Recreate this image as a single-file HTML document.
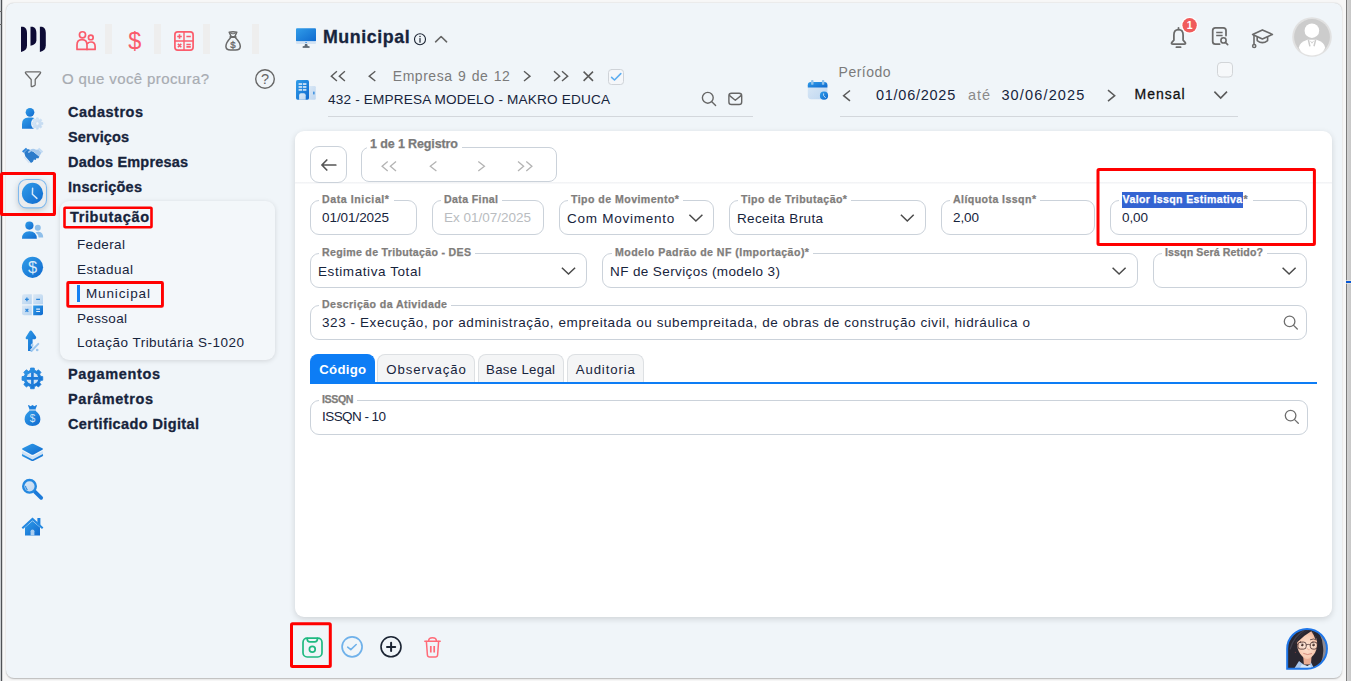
<!DOCTYPE html>
<html lang="pt-BR"><head>
<meta charset="utf-8">
<title>Municipal</title>
<style>
html,body{margin:0;padding:0}
body{width:1351px;height:681px;position:relative;overflow:hidden;background:#f7f7f7;font-family:"Liberation Sans",sans-serif;color:#17243c}
.a{position:absolute}
.t{position:absolute;white-space:nowrap;line-height:1;font-size:14px}
.b{font-weight:700}
.m{font-size:14.5px;font-weight:700;color:#17243c;-webkit-text-stroke:.3px #17243c}
.s{font-size:13.5px;color:#17243c}
.g{color:#7a7a7a}
.fld{position:absolute;border:1px solid #cbd2da;border-radius:9px;box-sizing:border-box;background:#fff}
.lb{position:absolute;white-space:nowrap;line-height:1;font-size:10.6px;font-weight:700;color:#807d7b;-webkit-text-stroke:.25px #807d7b;background:#fff;padding:0 4px 0 3px}
.v{font-size:13.5px;color:#17243c}
.red{position:absolute;border:3px solid #f00;box-sizing:border-box;border-radius:2px}
.tab{position:absolute;top:354px;height:28px;box-sizing:border-box;border:1px solid #dde0e3;border-bottom:none;border-radius:8px 8px 0 0;background:#f4f5f6}
svg{position:absolute;overflow:visible}
</style>
</head>
<body>
<!-- window chrome edges -->
<div class="a" style="left:0;top:0;width:3px;height:681px;background:linear-gradient(90deg,#d2d5d8 0,#c2c5c9 1px,#4f5256 1.25px,#4f5256 2.1px,#f7f7f7 2.6px)"></div>
<div class="a" style="left:1345px;top:0;width:6px;height:681px;background:linear-gradient(90deg,#f7f7f7 0,#f7f7f7 .6px,#6b6b6b 1px,#6b6b6b 1.4px,#d3d3d3 2px,#c7c7c7 100%)"></div>
<div class="a" style="left:1346.4px;top:280.4px;width:5px;height:3.4px;background:rgba(240,230,214,.7)"></div><div class="a" style="left:1346.2px;top:281px;width:5px;height:2.2px;background:#0757d6"></div>
<div class="a" style="left:0;top:24px;width:1.5px;height:1px;background:#666"></div>
<div class="a" style="left:0;top:10.5px;width:1.5px;height:1px;background:#666"></div>

<!-- app container -->
<div class="a" id="app" style="left:5.5px;top:2.5px;width:1336.5px;height:675.5px;background:#f0f5f9;border-radius:8px;box-shadow:0 .5px 1.5px rgba(0,0,0,.26)"></div>

<!-- ===== SIDEBAR ===== -->
<div id="side">
<!-- separators in top icon row -->
<div class="a" style="left:105px;top:24px;width:7px;height:29.6px;background:#eeeeee"></div>
<div class="a" style="left:154px;top:24px;width:7px;height:29.6px;background:#eeeeee"></div>
<div class="a" style="left:203px;top:24px;width:7px;height:29.6px;background:#eeeeee"></div>
<div class="a" style="left:252px;top:24px;width:7px;height:29.6px;background:#eeeeee"></div>

<span class="t" style="left: 62px; font-size: 15px; color: rgb(168, 172, 178); -webkit-text-stroke: 0.2px rgb(168, 172, 178); top: 71.3px; letter-spacing: 0.384px;">O que você procura?</span>

<span class="t m" style="left: 68px; top: 105.03px; letter-spacing: 0.51px;">Cadastros</span>
<span class="t m" style="left: 68px; top: 130.03px; letter-spacing: 0.076px;">Serviços</span>
<span class="t m" style="left: 68px; top: 155.03px; letter-spacing: 0.179px;">Dados Empresas</span>
<span class="t m" style="left: 68px; top: 180.03px; letter-spacing: 0.25px;">Inscrições</span>

<div class="a" style="left:60px;top:201px;width:215px;height:159px;background:#f3f7fa;border-radius:9px;box-shadow:0 1px 5px rgba(0,0,0,.13)"></div>
<span class="t m" style="left: 70px; top: 210.03px; letter-spacing: 0.63px;">Tributação</span>
<span class="t s" style="left: 77px; top: 237.57px; letter-spacing: 0.37px;">Federal</span>
<span class="t s" style="left: 77px; top: 262.57px; letter-spacing: 0.493px;">Estadual</span>
<div class="a" style="left:77px;top:285px;width:3px;height:17px;background:#1580f2"></div>
<span class="t s" style="left: 86px; top: 286.57px; letter-spacing: 0.871px;">Municipal</span>
<span class="t s" style="left: 77px; top: 311.57px; letter-spacing: 0.328px;">Pessoal</span>
<span class="t s" style="left: 77px; top: 335.57px; letter-spacing: 0.485px;">Lotação Tributária S-1020</span>

<span class="t m" style="left: 68px; top: 367.03px; letter-spacing: 0.641px;">Pagamentos</span>
<span class="t m" style="left: 68px; top: 392.03px; letter-spacing: 0.578px;">Parâmetros</span>
<span class="t m" style="left: 68px; top: 417.03px; letter-spacing: 0.385px;">Certificado Digital</span>

</div>

<!-- ===== HEADER ===== -->
<div id="head">
<span class="t b" style="left: 322.9px; font-size: 17.8px; color: rgb(23, 36, 60); -webkit-text-stroke: 0.3px rgb(23, 36, 60); top: 28.63px; letter-spacing: 0.6px;">Municipal</span>

<span class="t" style="left: 392.8px; font-size: 14px; color: rgb(123, 123, 123); word-spacing: 1px; top: 69.25px; letter-spacing: 0.527px;">Empresa 9 de 12</span>
<span class="t" style="left: 328px; font-size: 13.6px; color: rgb(23, 36, 60); top: 92.79px; letter-spacing: 0.168px;">432 - EMPRESA MODELO - MAKRO EDUCA</span>
<div class="a" style="left:328px;top:116px;width:425px;height:1px;background:#d3d7dc"></div>

<span class="t" style="left: 838.6px; font-size: 14px; color: rgb(123, 123, 123); top: 65.05px; letter-spacing: 0.492px;">Período</span>
<span class="t" style="left: 876px; font-size: 14.5px; color: rgb(23, 36, 60); top: 88.33px; letter-spacing: 0.736px;">01/06/2025</span>
<span class="t" style="left: 968px; font-size: 14.5px; color: rgb(138, 138, 138); top: 88.33px; letter-spacing: 1.014px;">até</span>
<span class="t" style="left: 1001.4px; font-size: 14.5px; color: rgb(23, 36, 60); top: 88.43px; letter-spacing: 1.158px;">30/06/2025</span>
<span class="t" style="left: 1134.6px; font-size: 14px; color: rgb(17, 17, 17); -webkit-text-stroke: 0.28px rgb(17, 17, 17); top: 87.45px; letter-spacing: 0.972px;">Mensal</span>
<div class="a" style="left:840px;top:116px;width:398px;height:1px;background:#d3d7dc"></div>
</div>

<!-- ===== CARD ===== -->
<div class="a" id="card" style="left:295px;top:131px;width:1037px;height:486px;background:#fff;border-radius:9px;box-shadow:0 2px 6px rgba(0,0,0,.14)"></div>
<div class="a" style="left:295px;top:182px;width:1037px;height:2px;background:linear-gradient(#f0f1f3,#fbfbfc)"></div>

<div id="form">
<div class="fld" style="left:310px;top:146px;width:37px;height:37px"></div>
<div class="fld" style="left:361px;top:147px;width:196px;height:35px;border-radius:8px"></div>
<span class="lb" style="left: 367px; font-size: 12.5px; color: rgb(122, 122, 122); top: 138.42px; letter-spacing: -0.116px;">1 de 1 Registro</span>

<!-- row 1 -->
<div class="fld" style="left:310px;top:200px;width:107px;height:35px"></div>
<span class="lb" style="left: 319px; top: 194.03px; letter-spacing: 0.578px;">Data Inicial*</span>
<span class="t v" style="left: 322px; top: 210.57px; letter-spacing: -0.064px;">01/01/2025</span>

<div class="fld" style="left:432px;top:200px;width:112px;height:35px"></div>
<span class="lb" style="left: 441px; top: 194.03px; letter-spacing: 0.373px;">Data Final</span>
<span class="t v" style="left: 444px; color: rgb(185, 188, 192); top: 210.57px; letter-spacing: -0.007px;">Ex 01/07/2025</span>

<div class="fld" style="left:559px;top:200px;width:155px;height:35px"></div>
<span class="lb" style="left: 568px; top: 194.03px; letter-spacing: 0.444px;">Tipo de Movimento*</span>
<span class="t v" style="left: 567px; top: 211.87px; letter-spacing: 0.743px;">Com Movimento</span>

<div class="fld" style="left:729px;top:200px;width:197px;height:35px"></div>
<span class="lb" style="left: 738px; top: 194.03px; letter-spacing: 0.438px;">Tipo de Tributação*</span>
<span class="t v" style="left: 737px; top: 211.87px; letter-spacing: 0.35px;">Receita Bruta</span>

<div class="fld" style="left:941px;top:200px;width:154px;height:35px"></div>
<span class="lb" style="left: 950px; top: 194.03px; letter-spacing: 0.421px;">Alíquota Issqn*</span>
<span class="t v" style="left: 953px; top: 210.57px; letter-spacing: -0.094px;">2,00</span>

<div class="fld" style="left:1110px;top:200px;width:197px;height:35px"></div>
<div class="a" style="left:1119px;top:192px;width:134px;height:12px;background:#fff"></div><div class="a" style="left:1122px;top:191.8px;width:120.8px;height:15.9px;background:#3464d2"></div>
<span class="lb" style="left: 1122.6px; padding: 0px; background: none; color: rgb(255, 255, 255); -webkit-text-stroke: 0.25px rgb(255, 255, 255); top: 194.03px; letter-spacing: 0.34px;">Valor Issqn Estimativa</span><span class="lb" style="left: 1243.6px; padding: 0px; background: none; top: 194.03px;">*</span>
<span class="t v" style="left: 1122px; top: 210.57px; letter-spacing: -0.094px;">0,00</span>

<!-- row 2 -->
<div class="fld" style="left:310px;top:253px;width:277px;height:35px"></div>
<span class="lb" style="left: 319px; top: 247.43px; letter-spacing: 0.308px;">Regime de Tributação - DES</span>
<span class="t v" style="left: 318px; top: 264.57px; letter-spacing: 0.58px;">Estimativa Total</span>

<div class="fld" style="left:602px;top:253px;width:536px;height:35px"></div>
<span class="lb" style="left: 612px; top: 247.43px; letter-spacing: 0.452px;">Modelo Padrão de NF (Importação)*</span>
<span class="t v" style="left: 610px; top: 264.57px; letter-spacing: 0.393px;">NF de Serviços (modelo 3)</span>

<div class="fld" style="left:1153px;top:253px;width:154px;height:35px"></div>
<span class="lb" style="left: 1162px; top: 247.43px; letter-spacing: 0.119px;">Issqn Será Retido?</span>

<!-- row 3 -->
<div class="fld" style="left:310px;top:305px;width:997px;height:35px"></div>
<span class="lb" style="left: 319px; top: 299.03px; letter-spacing: 0.42px;">Descrição da Atividade</span>
<span class="t v" style="left: 322px; top: 315.57px; letter-spacing: 0.582px;">323 - Execução, por administração, empreitada ou subempreitada, de obras de construção civil, hidráulica o</span>

<!-- tabs -->
<div class="tab" style="left:310px;width:65px;background:#0d7df5;border-color:#0d7df5"></div>
<span class="t" style="left: 319.3px; font-size: 13.2px; color: rgb(255, 255, 255); font-weight: 700; top: 362.83px; letter-spacing: 0.276px;">Código</span>
<div class="tab" style="left:377px;width:97.5px"></div>
<span class="t" style="left: 386.3px; font-size: 13.2px; color: rgb(23, 36, 60); top: 362.83px; letter-spacing: 0.943px;">Observação</span>
<div class="tab" style="left:477.5px;width:86px"></div>
<span class="t" style="left: 486px; font-size: 13.2px; color: rgb(23, 36, 60); top: 362.83px; letter-spacing: 0.333px;">Base Legal</span>
<div class="tab" style="left:566.5px;width:77px"></div>
<span class="t" style="left: 575.8px; font-size: 13.2px; color: rgb(23, 36, 60); top: 362.83px; letter-spacing: 0.867px;">Auditoria</span>
<div class="a" style="left:310px;top:381.8px;width:1007px;height:2px;background:#0d7df5"></div>

<div class="fld" style="left:310px;top:400px;width:998px;height:35px"></div>
<span class="lb" style="left: 319px; top: 394.03px; letter-spacing: -0.392px;">ISSQN</span>
<span class="t v" style="left: 322px; top: 410.07px; letter-spacing: -0.559px;">ISSQN - 10</span>

</div>

<!-- ICONS -->
<svg id="ic" width="1351" height="681" viewBox="0 0 1351 681" style="left:0;top:0" fill="none" stroke-linecap="round" stroke-linejoin="round">
<defs>
<linearGradient id="bg" x1="0" y1="0" x2="1" y2="1"><stop offset="0" stop-color="#319de9"></stop><stop offset="1" stop-color="#0f69ce"></stop></linearGradient>
<linearGradient id="lg2" x1="0" y1="0" x2="1" y2="1"><stop offset="0" stop-color="#dce9f6"></stop><stop offset="1" stop-color="#bdd6f0"></stop></linearGradient>
<linearGradient id="lg" x1="0" y1="0" x2="1" y2="1"><stop offset="0" stop-color="#dbe8f5"></stop><stop offset="1" stop-color="#b5d3f0"></stop></linearGradient>
<clipPath id="avc"><circle cx="1312.2" cy="36.6" r="17.8"></circle></clipPath>
<clipPath id="chc"><path d="M1288,648.8 A19,19 0 1 1 1307,667.5 L1288,667.5 Z"></path></clipPath>
</defs>

<!-- logo -->
<g fill="#0d0b35" stroke="none">
<path d="M21,26.7 L23.2,26.7 Q27,27.8 27,33 L27,45.5 Q27,50.6 21,52 Z"></path>
<path d="M30.5,26.7 L32.6,26.7 Q36.4,27.8 36.4,33 L36.4,40.2 Q36.4,44.6 30.5,45.8 Z"></path>
<path d="M39.9,26.7 L42,26.7 Q45.8,27.8 45.8,33 L45.8,45.5 Q45.8,50.6 39.9,52 Z"></path>
</g>

<!-- top row icons -->
<g stroke="#fa5c6c" stroke-width="1.7">
<circle cx="82.5" cy="34.8" r="3.05"></circle>
<path d="M77,49.4 L77,45 Q77,39.7 82,39.7 Q87,39.7 87,45 L87,49.4 Z"></path>
<circle cx="90.8" cy="37.4" r="2.35"></circle>
<path d="M87,49.4 L95.1,49.4 L95.1,46.4 Q95.1,42 91,42 Q88.8,42 87.6,43.4"></path>
</g>
<text x="134.8" y="48.5" font-size="23.5" fill="#fa5c6c" stroke="none" text-anchor="middle" font-family="Liberation Sans, sans-serif">$</text>
<g stroke="#fb5c6c">
<rect x="174.9" y="31.9" width="18.2" height="18.2" rx="2.8" stroke-width="1.7"></rect>
<path d="M184,32 V50 M175,41 H193" stroke-width="1.4"></path>
<path d="M177.2,36.5 H181.8 M179.5,34.2 V38.8 M186.4,36.5 H190.8 M177.9,43.9 L181.3,47.3 M181.3,43.9 L177.9,47.3 M186.4,44.5 H190.8 M186.4,46.9 H190.8" stroke-width="1.6" stroke-linecap="butt"></path>
</g>
<g stroke="#6a6a6a" stroke-width="1.5">
<path d="M230.6,37.8 Q226,42.6 225.9,46.3 Q225.9,50.1 230.5,50.1 H235.6 Q240.3,50.1 240.3,46.3 Q240.2,42.6 235.5,37.8"></path>
<path d="M230.9,35.9 L229.2,32.3 Q233,31.3 236.8,32.3 L235.1,35.9"></path>
<path d="M230.4,36.9 H235.6" stroke-width="2"></path>
<path d="M230.6,33.2 Q233,34.8 235.4,33.2" stroke-width="1"></path>
</g>
<text x="233" y="47.7" font-size="9.6" fill="#666" stroke="#666" stroke-width=".3" text-anchor="middle" font-family="Liberation Sans, sans-serif">$</text>

<!-- filter + help -->
<path d="M26.5,71.9 H39.5 Q41.4,71.9 40.2,73.5 L35.2,79.5 V84.6 Q35.2,85.4 34.5,85.7 L32.2,86.6 Q31.2,86.9 31.2,85.9 V79.5 L25.8,73.5 Q24.6,71.9 26.5,71.9 Z" stroke="#6a6a6a" stroke-width="1.25"></path>
<circle cx="265" cy="79" r="9.3" stroke="#666" stroke-width="1.4"></circle>
<text x="265" y="84.2" font-size="14.5" fill="#666" stroke="none" text-anchor="middle" font-family="Liberation Sans, sans-serif">?</text>

<!-- left column icons -->
<g stroke="none">
<!-- user gear -->
<circle cx="30" cy="112.3" r="4.35" fill="url(#bg)"></circle>
<path d="M22,128.8 L22,124 Q22,117.5 28.6,117.5 L31.4,117.5 Q35.6,117.5 36.6,121 L36.6,128.8 Z" fill="url(#bg)"></path>
<circle cx="37.3" cy="123.5" r="6.3" fill="#f0f5f9"></circle>
<path fill-rule="evenodd" fill="url(#lg2)" stroke="#c4dbf2" stroke-width=".6" stroke-linejoin="round" d="M41.58,122.47 L42.93,122.61 L42.93,124.39 L41.58,124.53 L41.05,125.80 L41.91,126.85 L40.65,128.11 L39.60,127.25 L38.33,127.78 L38.19,129.13 L36.41,129.13 L36.27,127.78 L35.00,127.25 L33.95,128.11 L32.69,126.85 L33.55,125.80 L33.02,124.53 L31.67,124.39 L31.67,122.61 L33.02,122.47 L33.55,121.20 L32.69,120.15 L33.95,118.89 L35.00,119.75 L36.27,119.22 L36.41,117.87 L38.19,117.87 L38.33,119.22 L39.60,119.75 L40.65,118.89 L41.91,120.15 L41.05,121.20 Z M35.60,123.50 a1.70,1.70 0 1 0 3.40,0 a1.70,1.70 0 1 0 -3.40,0 Z"></path>
<!-- handshake -->
<g transform="translate(16,102) scale(.1)">
<path d="M60,492 L100,458 L114,472 L74,508 Z" fill="#2f86db"></path>
<path d="M232,458 L272,494 L258,510 L218,472 Z" fill="#c3dbf3"></path>
<path d="M82,505 L118,470 L150,482 L176,500 L234,548 L222,566 L206,560 L196,581 L179,576 L169,598 L150,609 L94,546 Z" fill="#2b7bcb"></path>
<path d="M88,548 L140,606 L128,612 L78,556 Z" fill="#cddff2" opacity=".8"></path>
<path d="M222,476 L255,508 L232,546 L180,501 L152,492 L130,511 Q118,508 120,497 L150,472 Q176,462 200,478 Z" fill="#a6c9ed"></path>
</g>
<!-- clock (selected) -->
</g>
<rect x="18.5" y="179.5" width="28" height="28.4" rx="8" fill="#eaecee" stroke="#7fb9ee" stroke-width="1.1" style="filter:drop-shadow(0 2px 3px rgba(0,0,0,.18))"></rect>
<circle cx="32.5" cy="193.4" r="10.6" fill="url(#bg)"></circle>
<path d="M32.6,188.2 L32.4,194.2 L36.9,198.4" stroke="#d4e7f8" stroke-width="1.5"></path>
<g stroke="none">
<!-- users -->
<circle cx="37.8" cy="227.7" r="3" fill="#8fbfea"></circle>
<path d="M35.5,232.6 Q37,231.6 38.8,231.8 Q43.2,232.4 43.2,237.6 L38.6,237.6 Q38.4,234.4 35.5,232.6 Z" fill="#8fbfea"></path>
<circle cx="29.4" cy="225.6" r="4.1" fill="url(#bg)"></circle>
<path d="M22,238.8 Q22,231.2 29.4,231.2 Q36.8,231.2 36.8,238.8 Z" fill="url(#bg)"></path>
<!-- dollar circle -->
<circle cx="32.5" cy="267.3" r="10.6" fill="url(#bg)"></circle>
<text x="32.5" y="273" font-size="16.5" fill="#d9e9f8" text-anchor="middle" font-family="Liberation Sans, sans-serif">$</text>
<!-- calc -->
<path d="M24,294.3 H31.8 V304.2 H22 V296.3 Q22,294.3 24,294.3 Z" fill="url(#lg)"></path>
<path d="M33.2,294.3 H41 Q43,294.3 43,296.3 V304.2 H33.2 Z" fill="url(#lg)"></path>
<path d="M22,305.4 H31.8 V315.2 H24 Q22,315.2 22,313.2 Z" fill="url(#lg)"></path>
<path d="M33.2,305.4 H43 V313.2 Q43,315.2 41,315.2 H33.2 Z" fill="url(#bg)"></path>
</g>
<path d="M25,299.3 H28.8 M26.9,297.4 V301.2 M36.2,299.3 H40 M25.5,308.9 L28.3,311.7 M28.3,308.9 L25.5,311.7" stroke="#2a86dc" stroke-width="1.3" stroke-linecap="butt"></path>
<path d="M36.2,309.2 H40 M36.2,311.5 H40" stroke="#e4f0fb" stroke-width="1.2" stroke-linecap="butt"></path>
<g stroke="none">
<!-- arrow percent -->
<path d="M30.8,330.5 Q31.6,330.5 32.2,331.4 L35.9,336.6 Q36.7,338 35.7,338.8 Q35.1,339.3 33.9,339.3 L32.6,339.3 L32.6,351 L28,351 L28,339.3 L27.3,339.3 Q25.1,339.1 25.8,337.2 L29.4,331.4 Q30,330.5 30.8,330.5 Z" fill="url(#bg)"></path>
<path d="M31.4,351 L38.3,343.9" stroke="#f0f5f9" stroke-width="3.6" stroke-linecap="butt"></path>
<path d="M31.4,351 L38.3,343.9" stroke="#9cc6ee" stroke-width="2"></path>
<circle cx="32.5" cy="345.2" r="1.35" fill="#9cc6ee" stroke="#f0f5f9" stroke-width=".5"></circle>
<circle cx="37.2" cy="350" r="1.35" fill="#9cc6ee"></circle>
</g>
<!-- gear plus -->
<path d="M30.31,370.26 L30.59,368.06 L34.21,368.06 L34.49,370.26 L36.68,371.17 L38.44,369.81 L40.99,372.36 L39.63,374.12 L40.54,376.31 L42.74,376.59 L42.74,380.21 L40.54,380.49 L39.63,382.68 L40.99,384.44 L38.44,386.99 L36.68,385.63 L34.49,386.54 L34.21,388.74 L30.59,388.74 L30.31,386.54 L28.12,385.63 L26.36,386.99 L23.81,384.44 L25.17,382.68 L24.26,380.49 L22.06,380.21 L22.06,376.59 L24.26,376.31 L25.17,374.12 L23.81,372.36 L26.36,369.81 L28.12,371.17 Z" fill="url(#bg)" stroke="#1f80dc" stroke-width=".8" stroke-linejoin="round"></path>
<circle cx="32.4" cy="378.4" r="5.9" fill="#cfe2f5"></circle>
<path d="M26.2,378.4 H38.6 M32.4,372.2 V384.6" stroke="#1c7ad9" stroke-width="2.6" stroke-linecap="butt"></path>
<g stroke="none">
<!-- money bag blue -->
<path d="M29.2,411 Q24.4,414.6 24.6,419.6 Q24.8,426 32.5,426 Q40.2,426 40.4,419.6 Q40.6,414.6 35.8,411 Z" fill="url(#bg)"></path>
<path d="M29.6,409.4 L28,405.4 Q28.2,404.8 29,405.2 L30.6,406.2 L32.5,405 L34.4,406.2 L36,405.2 Q36.8,404.8 37,405.4 L35.4,409.4 Z" fill="#1f80dc"></path>
<rect x="29.2" y="409.2" width="6.6" height="1.8" fill="#8fbfea"></rect>
<text x="32.5" y="422.2" font-size="10" fill="#cfe3f7" text-anchor="middle" font-family="Liberation Sans, sans-serif">$</text>
<!-- layers -->
<path d="M22.3,451 L32.5,456.4 L42.7,451 L43.1,453.7 L32.5,459.2 L21.9,453.7 Z" fill="#cfe2f5"></path>
<path d="M22.2,454 L32.5,459.4 L42.8,454 Q43.7,455.4 42.6,456.2 L33.7,460.7 Q32.5,461.3 31.3,460.7 L22.4,456.2 Q21.3,455.4 22.2,454 Z" fill="url(#bg)"></path>
<path d="M31.3,444.1 Q32.5,443.5 33.7,444.1 L42.4,448.2 Q43.7,448.9 42.4,449.7 L33.7,454.4 Q32.5,455 31.3,454.4 L22.6,449.7 Q21.3,448.9 22.6,448.2 Z" fill="url(#bg)"></path>
</g>
<!-- magnifier -->
<path d="M34.8,491.6 L41.2,497.9" stroke="#1c7ad9" stroke-width="3.7"></path>
<circle cx="29.5" cy="486.3" r="6.3" stroke="#2488e0" stroke-width="2.4" fill="url(#lg2)"></circle>
<path d="M25.6,486.4 Q25.8,488.4 27.2,489.6" stroke="#2a8ae0" stroke-width="1.1" fill="none"></path>
<g stroke="none">
<!-- home -->
<rect x="37.4" y="518" width="3" height="7" fill="#1f80dc"></rect>
<path d="M25,527.6 L32.5,521 L40,527.6 L40,535.4 L25,535.4 Z" fill="url(#bg)"></path>
<path d="M32.5,517.4 L43.4,527.4 L42,529 L32.5,520.4 L23,529 L21.6,527.4 Z" fill="#2589e1"></path>
<path d="M30.6,535.4 V531.2 Q30.6,529.4 32.5,529.4 Q34.4,529.4 34.4,531.2 V535.4 Z" fill="#a9cdf0"></path>
</g>

<!-- header: monitor -->
<g stroke="none">
<rect x="296" y="28.2" width="20" height="13.2" rx="1" fill="url(#bg)"></rect>
<path d="M296,41.2 H316 V43 Q316,44 315,44 H297 Q296,44 296,43 Z" fill="#d3e3f3"></path>
<path d="M305,44 H307.2 L307.8,46.6 H304.4 Z" fill="#5d6a77"></path>
<rect x="302.6" y="46.2" width="7" height="1.5" rx=".5" fill="#46525e"></rect>
<rect x="305.3" y="42.1" width="1.6" height=".9" fill="#3a8fe0"></rect>
</g>
<circle cx="420" cy="39.2" r="5.5" stroke="#1b2433" stroke-width="1.1"></circle>
<circle cx="420" cy="36.5" r=".75" fill="#1b2433"></circle>
<path d="M420,38.6 V42.2" stroke="#1b2433" stroke-width="1.2"></path>
<path d="M435.6,41.8 L441.1,36.5 L446.6,41.8" stroke="#666" stroke-width="1.6"></path>

<!-- building -->
<g stroke="none">
<rect x="308" y="86" width="7.8" height="13.7" rx="1.2" fill="url(#lg2)"></rect>
<rect x="313.1" y="91.6" width="1.5" height="2.8" rx=".4" fill="#3a8fe0"></rect>
<rect x="296" y="80.1" width="13" height="19.6" rx="1.6" fill="url(#bg)"></rect>
<g fill="#c4dcf4">
<rect x="298.6" y="83.1" width="3.5" height="1.9"></rect><rect x="302.9" y="83.1" width="3.5" height="1.9"></rect>
<rect x="298.6" y="86" width="3.5" height="1.9"></rect><rect x="302.9" y="86" width="3.5" height="1.9"></rect>
<rect x="298.6" y="88.9" width="3.5" height="1.9"></rect><rect x="302.9" y="88.9" width="3.5" height="1.9"></rect>
</g>
<path d="M299.1,99.7 V95.2 Q299.1,93.3 301,93.3 H303.8 Q305.7,93.3 305.7,95.2 V99.7 Z" fill="url(#lg2)"></path>
</g>

<!-- company nav -->
<g stroke="#5a5a5a" stroke-width="1.4" stroke-linejoin="miter" stroke-linecap="butt">
<path d="M336.9,71.3 L331.3,76.15 L336.9,81"></path><path d="M344.9,71.3 L339.3,76.15 L344.9,81"></path>
<path d="M375.3,71.3 L369.2,76.15 L375.3,81"></path>
<path d="M524,71.3 L530,76.15 L524,81"></path>
<path d="M554,71.3 L559.7,76.15 L554,81"></path><path d="M562,71.3 L567.7,76.15 L562,81"></path>
<path d="M583.6,71.6 L593,80.9 M593,71.6 L583.6,80.9" stroke-width="1.5"></path>
</g>
<rect x="608.5" y="69.5" width="15" height="15" rx="3" fill="#f5f7fa" stroke="#cfd3d8"></rect>
<path d="M611.6,77.4 L614.5,80 L620.8,73.6" stroke="#5eaef0" stroke-width="1.6"></path>
<circle cx="707.8" cy="97.8" r="5.4" stroke="#666" stroke-width="1.4"></circle>
<path d="M711.8,101.8 L715.6,105.4" stroke="#666" stroke-width="1.4"></path>
<rect x="728.9" y="93.3" width="12.8" height="11.2" rx="2.6" stroke="#666" stroke-width="1.4"></rect>
<path d="M729.6,95.6 L735.3,100.2 L741,95.6" stroke="#666" stroke-width="1.4"></path>

<!-- calendar -->
<g stroke="none">
<rect x="807.8" y="82" width="19.6" height="17.2" rx="3.4" fill="url(#lg2)"></rect>
<path d="M807.8,87.4 V85.2 Q807.8,81.9 811.1,81.9 H824.1 Q827.4,81.9 827.4,85.2 V87.4 Z" fill="url(#bg)"></path>
<rect x="811.1" y="80" width="2.4" height="4.8" rx=".9" fill="#8fc1ea"></rect>
<rect x="821.9" y="80" width="2.4" height="4.8" rx=".9" fill="#8fc1ea"></rect>
<circle cx="824" cy="95.7" r="4.1" fill="url(#bg)"></circle>
<path d="M823.6,93.8 V95.6 L825.4,97.6" stroke="#cfe3f7" stroke-width=".9" fill="none"></path>
</g>
<g stroke="#5a5a5a" stroke-width="1.5" stroke-linejoin="miter" stroke-linecap="butt">
<path d="M850,90.5 L843.6,95.7 L850,100.9"></path>
<path d="M1108,90.2 L1114.7,95.7 L1108,101.2"></path>
<path d="M1214.4,91.6 L1220.7,98 L1227,91.6" stroke-width="1.6"></path>
</g>
<rect x="1217.5" y="62.5" width="15" height="14.5" rx="3.5" fill="#f6f8fa" stroke="#d2d5d8"></rect>

<!-- top-right icons -->
<g stroke="#6a6a6a" stroke-width="1.75">
<path d="M1173.9,40.2 V35 Q1173.9,29.7 1178.5,29.7 Q1183.1,29.7 1183.1,35 V40.2 L1185.3,42.6 Q1186,44.2 1184.2,44.2 H1172.8 Q1171,44.2 1171.7,42.6 Z"></path>
<path d="M1178.5,27.8 V29.4 M1176.4,47.2 H1180.6"></path>
<path d="M1226,35.6 V30.6 Q1226,27.9 1223.3,27.9 H1215.4 Q1212.7,27.9 1212.7,30.6 V41.5 Q1212.7,44.2 1215.4,44.2 H1219.6"></path>
<path d="M1216.2,32.4 H1222.6 M1216.2,35.5 H1222.6" stroke-width="1.5" stroke-linecap="butt"></path>
<circle cx="1223.5" cy="40.4" r="2.6" stroke-width="1.6"></circle>
<path d="M1225.6,42.6 L1227.7,44.6" stroke-width="1.6"></path>
<path d="M1252.6,34.4 L1262.4,29.9 L1272.4,34.4 L1262.4,38.9 Z" stroke-width="1.6"></path>
<path d="M1257.2,36.8 V40.6 Q1262.4,44.8 1267.6,40.6 V36.8" stroke-width="1.6"></path>
<path d="M1254,35.2 V44" stroke-width="1.6"></path>
<circle cx="1254.2" cy="46" r="1.6" stroke-width="1.5"></circle>
</g>
<circle cx="1189.6" cy="25.3" r="8.4" fill="#fff"></circle>
<circle cx="1189.6" cy="25.3" r="7.2" fill="#f05b5b"></circle>
<text x="1189.6" y="29" font-size="10.5" font-weight="700" fill="#fff" text-anchor="middle" font-family="Liberation Sans, sans-serif">1</text>
<circle cx="1312" cy="37" r="19.8" fill="#e1e1e1"></circle>
<circle cx="1312" cy="37" r="17.9" fill="#cccccc"></circle>
<g stroke="none">
<circle cx="1311.9" cy="30.7" r="7.3" fill="#fff"></circle>
<path d="M1298.9,47.6 Q1299.4,42.6 1307.4,39.8 L1316.6,39.8 Q1324.6,42.6 1325.1,47.6 C1324,52.6 1318.5,55.5 1312,55.5 C1305.5,55.5 1300,52.6 1298.9,47.6 Z" fill="#fff"></path>
<path d="M1308.4,39.9 L1309.9,46.3 M1315.6,39.9 L1314,46.3" stroke="#cccccc" stroke-width="1.5" stroke-linecap="butt"></path>
<path d="M1310.6,41.2 L1312,43.2 L1313.4,41.2" stroke="#d6d6d6" stroke-width="1" fill="none"></path>
</g>

<!-- form icons -->
<path d="M322.2,165 H335.8 M326.8,160 L321.9,165 L326.8,170" stroke="#555" stroke-width="1.7"></path>
<g stroke="#b3b3b3" stroke-width="1.3" stroke-linejoin="miter" stroke-linecap="butt">
<path d="M387.7,161.6 L382.1,166.3 L387.7,171"></path><path d="M396,161.6 L390.4,166.3 L396,171"></path>
<path d="M436.4,161.6 L430.3,166.3 L436.4,171"></path>
<path d="M478.3,161.6 L484.4,166.3 L478.3,171"></path>
<path d="M518,161.6 L523.6,166.3 L518,171"></path><path d="M526.3,161.6 L531.9,166.3 L526.3,171"></path>
</g>
<g stroke="#4a4a4a" stroke-width="1.5" stroke-linejoin="miter" stroke-linecap="butt">
<path d="M689.4,214.7 L695.9,221 L702.4,214.7"></path>
<path d="M900.9,214.7 L907.3,221 L913.7,214.7"></path>
<path d="M561.9,267.8 L568.5,274 L575.1,267.8"></path>
<path d="M1112.6,267.8 L1119.1,274 L1125.6,267.8"></path>
<path d="M1282.6,267.8 L1289.1,274 L1295.6,267.8"></path>
</g>
<g stroke="#6e6e6e" stroke-width="1.3">
<circle cx="1289.6" cy="321.4" r="5.3"></circle><path d="M1293.6,325.4 L1297.3,329"></path>
<circle cx="1290.6" cy="415.6" r="5.3"></circle><path d="M1294.6,419.6 L1298.3,423.2"></path>
</g>

<!-- bottom action icons -->
<g stroke="#1fb981" stroke-width="1.7">
<rect x="303" y="638.2" width="19" height="18.8" rx="4.2"></rect>
<path d="M307.2,638.4 V639 Q307.2,641.8 310,641.8 H314.6 Q317.4,641.8 317.4,639 V638.4"></path>
<circle cx="312.3" cy="649.2" r="2.9"></circle>
</g>
<circle cx="352.1" cy="646.8" r="10" stroke="#6fb1ea" stroke-width="1.7"></circle>
<path d="M347.7,647.2 L350.8,649.6 L356.2,644.5" stroke="#6fb1ea" stroke-width="1.6"></path>
<circle cx="391" cy="646.8" r="10" stroke="#1b2433" stroke-width="1.6"></circle>
<path d="M387,646.9 H395.2 M391.1,642.8 V651" stroke="#1b2433" stroke-width="2"></path>
<g stroke="#ff6b78" stroke-width="1.5">
<path d="M424.8,641.3 H440.2"></path>
<path d="M428.6,641 Q428.6,637.8 432.5,637.8 Q436.4,637.8 436.4,641"></path>
<path d="M426.4,641.6 L427.4,655 Q427.6,657 429.6,657 H435.4 Q437.4,657 437.6,655 L438.6,641.6"></path>
<path d="M430.8,646 V652.6 M434.2,646 V652.6" stroke-width="1.7" stroke-linecap="butt"></path>
</g>

<!-- chat avatar -->
<g transform="translate(1281,623) scale(0.076336)">
<clipPath id="chc2"><path d="M81,338.5 A260.5,260.5 0 1 1 341.5,599 L81,599 Z"></path></clipPath>
<radialGradient id="skin" cx=".5" cy=".55" r=".6"><stop offset="0" stop-color="#fde3d2"></stop><stop offset=".6" stop-color="#f8cfb8"></stop><stop offset="1" stop-color="#eeb296"></stop></radialGradient>
<g clip-path="url(#chc2)" stroke="none">
<rect x="60" y="60" width="560" height="560" fill="#2a2730"></rect>
<path d="M505,140 Q610,240 600,370 Q585,470 520,530 Q565,420 550,310 Q545,215 505,140 Z" fill="#8c8991"></path>
<path d="M300,100 Q170,170 120,340" stroke="#4b4956" stroke-width="16" fill="none" opacity=".7"></path>
<path d="M350,95 Q240,150 185,270" stroke="#45434f" stroke-width="10" fill="none" opacity=".6"></path>
<path d="M290,430 H400 L392,545 H300 Z" fill="#e9ad94"></path>
<path d="M165,610 L236,498 Q262,522 302,546 L346,562 L386,540 Q392,520 384,498 L432,592 L432,610 Z" fill="#a9c6ea"></path>
<path d="M240,610 L272,540 L346,566 L382,546 L402,610 Z" fill="#d6e5f7"></path>
<path d="M213,252 Q203,332 250,402 Q300,470 345,473 Q400,466 446,390 Q482,320 471,230 Q442,130 396,108 Q300,162 213,252 Z" fill="url(#skin)"></path>
<path d="M396,108 Q430,150 452,215 Q470,190 440,140 Z" fill="#2a2730"></path>
<path d="M385,218 Q430,196 468,222" stroke="#2f2226" stroke-width="9" fill="none"></path>
<ellipse cx="276" cy="288" rx="24" ry="25" fill="#fff6ef"></ellipse>
<ellipse cx="428" cy="288" rx="23" ry="25" fill="#fff6ef"></ellipse>
<circle cx="278" cy="288" r="19" fill="#5a3326"></circle>
<circle cx="426" cy="288" r="19" fill="#5a3326"></circle>
<circle cx="278" cy="288" r="9" fill="#24140f"></circle>
<circle cx="426" cy="288" r="9" fill="#24140f"></circle>
<circle cx="270" cy="280" r="5" fill="#fff"></circle>
<circle cx="418" cy="280" r="5" fill="#fff"></circle>
<rect x="222" y="250" width="108" height="92" rx="34" fill="rgba(255,255,255,.12)" stroke="#3d2628" stroke-width="10"></rect>
<rect x="384" y="250" width="92" height="92" rx="34" fill="rgba(255,255,255,.12)" stroke="#3d2628" stroke-width="10"></rect>
<path d="M330,286 Q357,272 384,286" stroke="#3d2628" stroke-width="9" fill="none"></path>
<path d="M222,282 L180,268" stroke="#3d2628" stroke-width="8"></path>
<path d="M340,330 Q352,362 372,352" stroke="#e8a48e" stroke-width="9" fill="none"></path>
<path d="M296,400 Q345,428 402,402" stroke="#c56d62" stroke-width="9" fill="none"></path>
<circle cx="187" cy="383" r="6" fill="#c9574f"></circle>
</g>
<path d="M81,338.5 A260.5,260.5 0 1 1 341.5,599 L81,599 Z" fill="none" stroke="#1f76e8" stroke-width="26" stroke-linejoin="miter"></path>
</g>

<!-- highlight boxes -->
<g stroke="#ff0000" fill="none" stroke-linejoin="round">
<rect x="1.55" y="173.55" width="52.9" height="40.9" rx="1" stroke-width="3.1"></rect>
<rect x="64.5" y="207.7" width="87" height="19.6" rx=".8" stroke-width="2.6"></rect>
<rect x="67.75" y="282.55" width="94.7" height="23.8" rx=".8" stroke-width="2.9"></rect>
<rect x="1098" y="169.6" width="216.4" height="74.8" rx="1" stroke-width="3"></rect>
<rect x="291.5" y="623.7" width="38.8" height="42.9" rx="1" stroke-width="3"></rect>
</g>
</svg>
<!-- /ICONS -->


</body></html>
